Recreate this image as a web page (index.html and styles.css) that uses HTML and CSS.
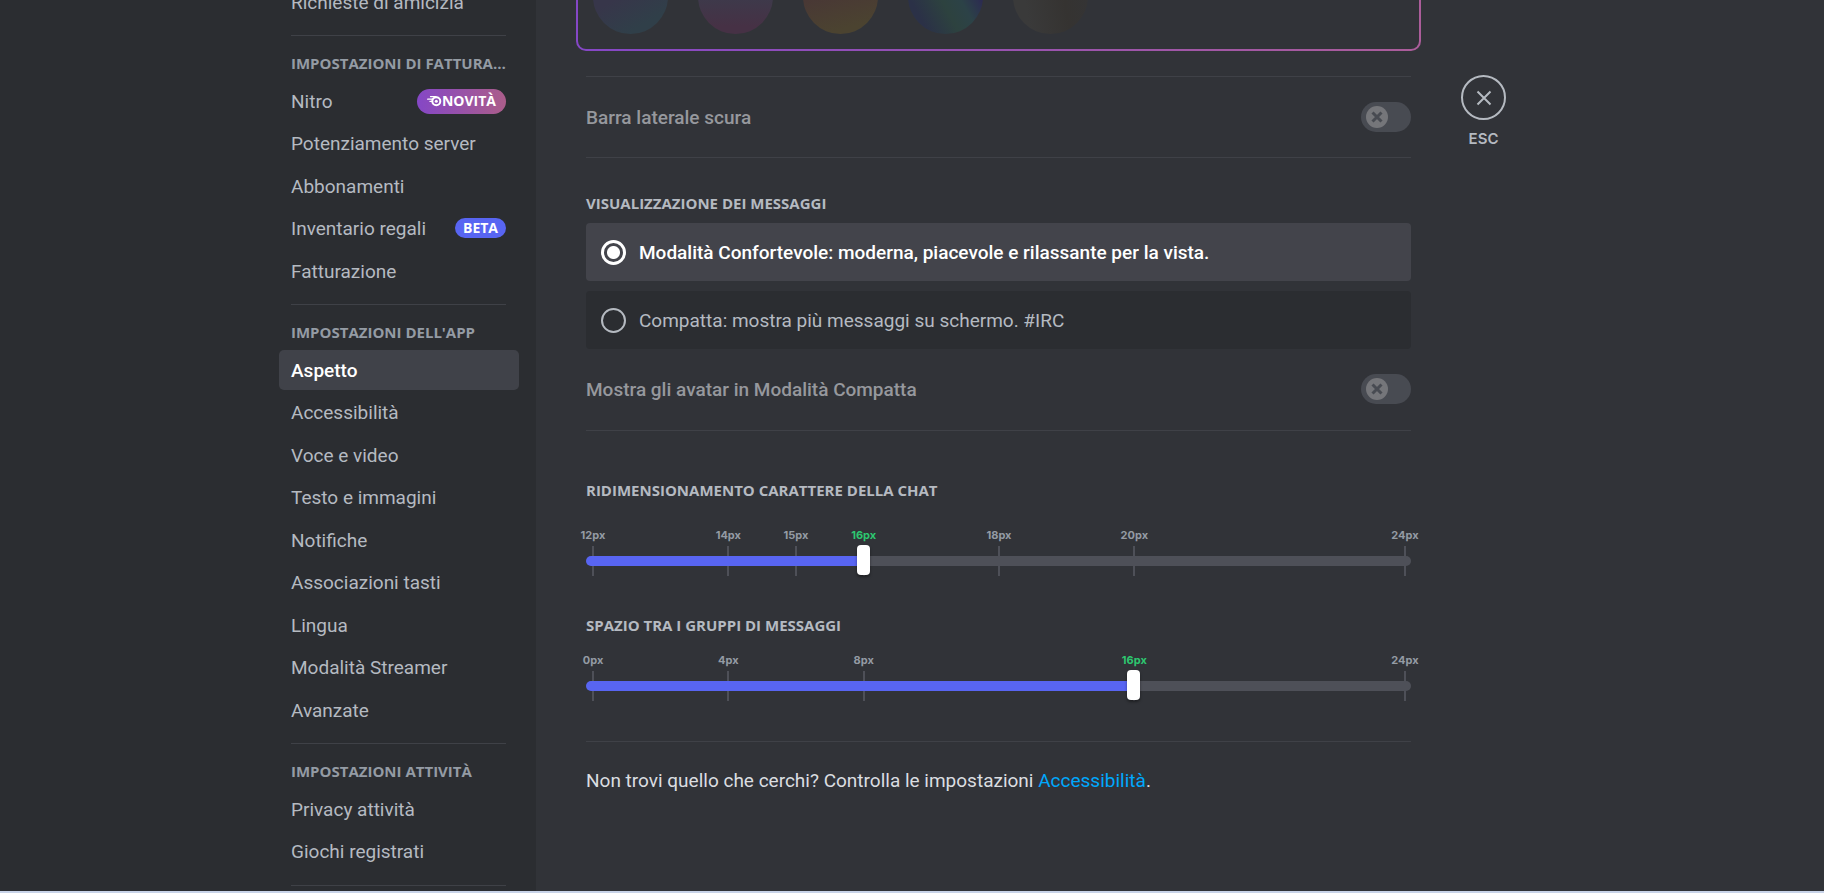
FILE: index.html
```html
<!DOCTYPE html>
<html lang="it">
<head>
<meta charset="utf-8">
<title>Impostazioni - Aspetto</title>
<link rel="stylesheet" href="styles.css">
</head>
<body>
<div class="app">
  <aside class="sidebar">
    <nav class="nav" aria-label="Impostazioni utente">
      <section class="nav-group">
        <a class="nav-item" href="#richieste">Richieste di amicizia</a>
      </section>
      <section class="nav-group">
        <h2 class="nav-title">Impostazioni di fatturazione</h2>
        <a class="nav-item" href="#nitro">Nitro
          <span class="badge badge-nitro">
            <svg class="nitro-icon" viewBox="0 0 15 12" aria-hidden="true">
              <path d="M3.5 1.6h5.5M.7 4.2h5M3 6.4h2" fill="none" stroke="currentColor" stroke-width="1.3" stroke-linecap="round"/>
              <circle cx="9.3" cy="6.3" r="4" fill="none" stroke="currentColor" stroke-width="2"/>
              <circle cx="9.3" cy="6.3" r="1.5" fill="currentColor"/>
            </svg>NOVITÀ</span>
        </a>
        <a class="nav-item" href="#potenziamento">Potenziamento server</a>
        <a class="nav-item" href="#abbonamenti">Abbonamenti</a>
        <a class="nav-item" href="#inventario">Inventario regali <span class="badge badge-beta">BETA</span></a>
        <a class="nav-item" href="#fatturazione">Fatturazione</a>
      </section>
      <section class="nav-group">
        <h2 class="nav-title">Impostazioni dell'app</h2>
        <a class="nav-item is-active" href="#aspetto" aria-current="page">Aspetto</a>
        <a class="nav-item" href="#accessibilita">Accessibilità</a>
        <a class="nav-item" href="#voce">Voce e video</a>
        <a class="nav-item" href="#testo">Testo e immagini</a>
        <a class="nav-item" href="#notifiche">Notifiche</a>
        <a class="nav-item" href="#tasti">Associazioni tasti</a>
        <a class="nav-item" href="#lingua">Lingua</a>
        <a class="nav-item" href="#streamer">Modalità Streamer</a>
        <a class="nav-item" href="#avanzate">Avanzate</a>
      </section>
      <section class="nav-group">
        <h2 class="nav-title">Impostazioni attività</h2>
        <a class="nav-item" href="#privacy">Privacy attività</a>
        <a class="nav-item" href="#giochi">Giochi registrati</a>
      </section>
    </nav>
  </aside>

  <main class="content">
    <div class="column">
      <div class="themes">
        <button class="swatch swatch-1" type="button" aria-label="Tema 1"></button>
        <button class="swatch swatch-2" type="button" aria-label="Tema 2"></button>
        <button class="swatch swatch-3" type="button" aria-label="Tema 3"></button>
        <button class="swatch swatch-4" type="button" aria-label="Tema 4"></button>
        <button class="swatch swatch-5" type="button" aria-label="Tema 5"></button>
      </div>

      <div class="switch-row switch-row-top">
        <label class="switch-label" for="dark-sidebar">Barra laterale scura</label>
        <span class="switch">
          <input class="switch-input" type="checkbox" role="switch" id="dark-sidebar" disabled>
          <svg class="switch-icon" viewBox="0 0 22 22" aria-hidden="true"><path d="M6.5 6.5l9 9M15.5 6.5l-9 9"/></svg>
        </span>
      </div>

      <fieldset class="display-mode">
        <legend class="heading">Visualizzazione dei messaggi</legend>
        <label class="option">
          <input class="radio" type="radio" name="display" checked>
          <span>Modalità Confortevole: moderna, piacevole e rilassante per la vista.</span>
        </label>
        <label class="option">
          <input class="radio" type="radio" name="display">
          <span>Compatta: mostra più messaggi su schermo. #IRC</span>
        </label>
      </fieldset>

      <div class="switch-row">
        <label class="switch-label" for="compact-avatars">Mostra gli avatar in Modalità Compatta</label>
        <span class="switch">
          <input class="switch-input" type="checkbox" role="switch" id="compact-avatars" disabled>
          <svg class="switch-icon" viewBox="0 0 22 22" aria-hidden="true"><path d="M6.5 6.5l9 9M15.5 6.5l-9 9"/></svg>
        </span>
      </div>

      <section class="setting">
        <label class="heading heading-font" for="font-size">Ridimensionamento carattere della chat</label>
        <div class="slider">
          <div class="marks marks-12">
            <span class="mark" style="grid-column:1">12px</span>
            <span class="mark" style="grid-column:3">14px</span>
            <span class="mark" style="grid-column:4">15px</span>
            <span class="mark is-default" style="grid-column:5">16px</span>
            <span class="mark" style="grid-column:7">18px</span>
            <span class="mark" style="grid-column:9">20px</span>
            <span class="mark" style="grid-column:13">24px</span>
          </div>
          <input class="range" type="range" id="font-size" min="12" max="24" value="16" style="--fill:33.6%">
        </div>
      </section>

      <section class="setting">
        <label class="heading heading-space" for="group-space">Spazio tra i gruppi di messaggi</label>
        <div class="slider">
          <div class="marks marks-6">
            <span class="mark" style="grid-column:1">0px</span>
            <span class="mark" style="grid-column:2">4px</span>
            <span class="mark" style="grid-column:3">8px</span>
            <span class="mark is-default" style="grid-column:5">16px</span>
            <span class="mark" style="grid-column:7">24px</span>
          </div>
          <input class="range" type="range" id="group-space" min="0" max="24" value="16" style="--fill:66.4%">
        </div>
      </section>

      <p class="hint">Non trovi quello che cerchi? Controlla le impostazioni <a class="link" href="#accessibilita">Accessibilità</a>.</p>
    </div>

    <div class="tools">
      <button class="close" type="button" aria-label="Chiudi" aria-describedby="esc">
        <svg class="close-icon" viewBox="0 0 16 16" aria-hidden="true"><path d="M1.5 1.5l13 13M14.5 1.5l-13 13"/></svg>
      </button>
      <span class="esc" id="esc">ESC</span>
    </div>
  </main>
</div>
</body>
</html>
```
FILE: styles.css
```css
* { box-sizing: border-box; }

body {
  margin: 0;
  height: 100vh;
  overflow: hidden;
  background: #313338;
  color: #dbdee1;
  font: 400 19px/25px Roboto, "Noto Sans", sans-serif;
}

.app {
  display: flex;
  height: 100%;
  overflow: hidden;
  border-bottom: 2px solid #c8d3e8;
}

/* Sidebar */
.sidebar {
  flex: 1 0 260px;
  display: flex;
  justify-content: flex-end;
  align-items: flex-start;
  padding-right: 17px;
  background: #2b2d31;
}

.nav {
  width: 240px;
  margin-top: -18px;
}

.nav-group { padding-bottom: 11px; }

.nav-group::after {
  content: "";
  display: block;
  height: 1px;
  margin: 0 13px 0 12px;
  background: #3f4147;
  transform: translateY(11px);
}

.nav-title {
  margin: 0;
  padding: 17px 13px 8px 12px;
  overflow: hidden;
  color: #949ba4;
  font: 700 15px/20px "Open Sans", "Noto Sans", sans-serif;
  text-overflow: ellipsis;
  text-transform: uppercase;
  white-space: nowrap;
}

.nav-item {
  display: flex;
  align-items: center;
  justify-content: space-between;
  height: 40px;
  margin-bottom: 2px;
  padding: 0 13px 0 12px;
  border-radius: 5px;
  color: #b5bac1;
  text-decoration: none;
}

.nav-title ~ .nav-item:nth-of-type(even) { margin-bottom: 3px; }

.is-active {
  background: #404249;
  color: #fff;
  font-weight: 500;
}

.badge {
  display: flex;
  align-items: center;
  border-radius: 13px;
  color: #fff;
  font: 700 14px/20px "Open Sans", "Noto Sans", sans-serif;
}

.badge-nitro {
  height: 25px;
  padding: 0 10px;
  background: linear-gradient(90deg, #8547c6, #ab5d8a);
}

.badge-beta {
  padding: 0 8px;
  background: #5865f2;
}

.nitro-icon { width: 15px; height: 12px; }

/* Main column */
.content {
  flex: 1 1 1012px;
  display: flex;
  align-items: flex-start;
}

.column {
  flex: 0 1 925px;
  padding: 0 50px;
}

.themes {
  display: flex;
  gap: 30px;
  height: 94px;
  margin: -43px -10px 25px;
  padding: 0 15px;
  border: 2px solid transparent;
  border-radius: 10px;
  background:
    linear-gradient(#313338, #313338) padding-box,
    linear-gradient(90deg, #8547c6, #ab5d9a) border-box;
}

.swatch {
  width: 75px;
  height: 75px;
  padding: 0;
  border: 0;
  border-radius: 50%;
}

.swatch-1 { background: linear-gradient(150deg, #37364a 45%, #303f49 80%); }
.swatch-2 { background: linear-gradient(180deg, #3d3a4b 50%, #463145 90%); }
.swatch-3 { background: linear-gradient(165deg, #493835 45%, #4b4330 85%); }
.swatch-4 { background: linear-gradient(62deg, #2b3147 18%, #2d423f 45%, #2c4247 62%, #2c2b51 80%); }
.swatch-5 { background: linear-gradient(80deg, #3a3a3a 20%, #353331 65%, #343435 95%); }

.switch-row {
  display: flex;
  align-items: center;
  justify-content: space-between;
  padding: 25px 0 26px;
  border-bottom: 1px solid #3f4147;
}

.switch-row-top {
  padding-bottom: 25px;
  border-top: 1px solid #3f4147;
}

.switch-label {
  color: #96989d;
  font-weight: 500;
}

.switch {
  display: grid;
  align-items: center;
}

.switch-input {
  grid-area: 1 / 1;
  width: 50px;
  height: 30px;
  margin: 0;
  border-radius: 15px;
  appearance: none;
  background: #484b52;
}

.switch-icon {
  grid-area: 1 / 1;
  width: 22px;
  height: 22px;
  margin-left: 5px;
  border-radius: 50%;
  background: #75767a;
  fill: none;
  stroke: #484b52;
  stroke-width: 3;
}

.heading {
  display: block;
  padding: 0;
  color: #b5bac1;
  font: 700 15px/20px "Open Sans", "Noto Sans", sans-serif;
  text-transform: uppercase;
}

.display-mode {
  display: grid;
  gap: 10px;
  margin: 35px 0 0;
  padding: 0;
  border: 0;
}

.display-mode .heading { margin-bottom: 10px; }

.option {
  display: flex;
  align-items: center;
  gap: 13px;
  height: 58px;
  padding: 0 15px;
  border-radius: 4px;
  background: #2b2d31;
  color: #b5bac1;
}

.option:has(:checked) {
  background: #43444b;
  color: #fff;
  font-weight: 500;
}

.radio {
  width: 25px;
  height: 25px;
  margin: 0;
  border: 2px solid #b5bac1;
  border-radius: 50%;
  appearance: none;
}

.radio:checked {
  border: 3px solid #fff;
  background: radial-gradient(circle, #fff 6px, transparent 7px);
}

/* Sliders */
.heading-font { margin: 49px 0 25px; }
.heading-space { margin: 39px 0 15px; }

.slider {
  display: grid;
}

.marks {
  grid-area: 1 / 1;
  display: grid;
  height: 51px;
  margin: 0 6px 0 7px;
}

.marks-12 { grid-template-columns: repeat(12, 1fr) 0; }
.marks-6 { grid-template-columns: repeat(6, 1fr) 0; }

.mark {
  display: flex;
  flex-direction: column;
  align-items: center;
  justify-content: space-between;
  width: 0;
  color: #949ba4;
  font: 700 11px/20px Inter, "Noto Sans", sans-serif;
}

.mark::after {
  content: "";
  width: 2px;
  height: 30px;
  background: #4e5058;
}

.is-default { color: #2dc770; }

.range {
  grid-area: 1 / 1;
  align-self: end;
  width: 100%;
  height: 30px;
  margin: 0;
  appearance: none;
  background: none;
}

.range::-webkit-slider-runnable-track {
  height: 10px;
  border-radius: 5px;
  background: linear-gradient(90deg, #5865f2 var(--fill), #4e5058 var(--fill));
}

.range::-webkit-slider-thumb {
  width: 13px;
  height: 30px;
  margin-top: -11px;
  border-radius: 4px;
  appearance: none;
  background: #fff;
  box-shadow: 0 2px 3px rgba(0, 0, 0, 0.4);
}

.hint {
  margin: 40px 0 0;
  padding-top: 26px;
  border-top: 1px solid #3f4147;
}

.link {
  color: #00a8fc;
  text-decoration: none;
}

/* Close control */
.tools {
  display: flex;
  flex-direction: column;
  align-items: center;
  gap: 9px;
  padding-top: 75px;
}

.close {
  display: grid;
  place-items: center;
  width: 45px;
  height: 45px;
  padding: 0;
  border: 2px solid #b5bac1;
  border-radius: 50%;
  background: none;
}

.close-icon {
  width: 16px;
  height: 16px;
  fill: none;
  stroke: #b5bac1;
  stroke-width: 2;
}

.esc {
  color: #b5bac1;
  font: 600 15px/20px Inter, "Noto Sans", sans-serif;
}
```
